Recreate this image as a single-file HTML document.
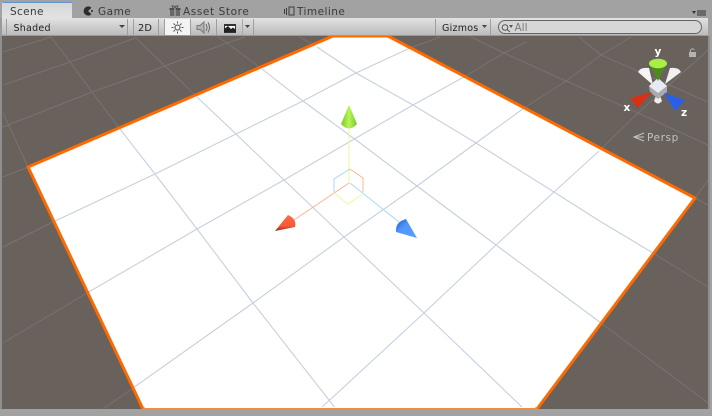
<!DOCTYPE html>
<html><head><meta charset="utf-8"><style>
html,body{margin:0;padding:0;width:712px;height:416px;overflow:hidden;background:#a2a2a2}
svg{display:block}
text{font-family:"DejaVu Sans","Liberation Sans",sans-serif}
</style></head><body>
<svg width="712" height="416" viewBox="0 0 712 416" xmlns="http://www.w3.org/2000/svg">
<defs>
<linearGradient id="tb" x1="0" y1="0" x2="0" y2="1"><stop offset="0" stop-color="#e2e2e2"/><stop offset="1" stop-color="#b9b9b9"/></linearGradient>
<linearGradient id="tab" x1="0" y1="0" x2="0" y2="1"><stop offset="0" stop-color="#d6d6d6"/><stop offset="1" stop-color="#e2e2e2"/></linearGradient>
<linearGradient id="gr" x1="0" y1="0" x2="1" y2="0"><stop offset="0" stop-color="#7ec62c"/><stop offset=".5" stop-color="#b6f556"/><stop offset="1" stop-color="#7cc82c"/></linearGradient>
<linearGradient id="rd" x1="0" y1="0" x2="0" y2="1"><stop offset="0" stop-color="#ff6a45"/><stop offset=".7" stop-color="#f55a35"/><stop offset="1" stop-color="#8a2a18"/></linearGradient>
<linearGradient id="bl" x1="0" y1="0" x2="1" y2="1"><stop offset="0" stop-color="#2a55c0"/><stop offset=".4" stop-color="#4f96ff"/><stop offset="1" stop-color="#58a0ff"/></linearGradient>
</defs>
<rect width="712" height="416" fill="#a2a2a2"/>
<!-- scene -->
<rect x="2" y="36" width="706" height="373" fill="#69615b"/>
<rect x="0" y="36" width="2" height="373" fill="#8f8f8f"/>
<rect x="708" y="36" width="2" height="373" fill="#8f8f8f"/>
<g stroke="#787372" stroke-width="1" fill="none">
<path d="M51 37L70 62L92 92L120 129"/>
<path d="M135 37L165 66L197 97"/>
<path d="M218 37L227 43L262 69"/>
<path d="M300 37L317 47"/>
<path d="M471 37L504 53L566 81L638 113L708 145"/>
<path d="M579 37L601 55L708 102"/>
<path d="M3 113L28 167"/>
<path d="M695 198L708 205"/>
<path d="M601 323L708 403"/>
<path d="M653 253L708 287"/>
<path d="M3 177L28 167"/>
<path d="M3 127L92 92L165 66L227 43L245 37"/>
<path d="M3 85L70 62L135 38"/>
<path d="M3 52L51 37"/>
<path d="M410 48L424 43L440 37"/>
<path d="M464 77L504 53L526 42"/>
<path d="M524 108L566 81L601 55L631 37"/>
<path d="M599 151L638 113L708 50"/>
<path d="M695 198L708 180"/>
<path d="M3 247L53 222"/>
<path d="M3 343L87 293"/>
<path d="M103 409L133 388"/>
</g>
<!-- plane -->
<path d="M333 36H388L695 198L537 409H143L28 167Z" fill="#fff"/>
<g stroke="#c6d0dd" stroke-width="1.100" fill="none">
<path d="M120 129L155 174L197 229L253 303L336 409"/>
<path d="M197 97L236 134L284 180L344 237L424 313L524 409"/>
<path d="M262 69L303 101L356 140L417 186L496 245L601 323"/>
<path d="M317 47L356 73L413 105L476 143L554 192L598 220L653 253"/>
<path d="M53 222L155 174L236 134L303 101L356 73L410 48"/>
<path d="M87 293L197 229L284 180L356 138L413 105L464 77"/>
<path d="M133 388L253 303L344 237L417 186L476 143L524 108"/>
<path d="M320 409L424 313L496 245L554 192L599 151"/>
</g>
<!-- plane outline -->
<path d="M333 36H388L695 198L537 409H143L28 167Z" fill="none" stroke="#ff6a00" stroke-width="3" stroke-linejoin="round"/>
<rect x="135" y="409" width="410" height="7" fill="#a2a2a2"/>
<rect x="143" y="408" width="394" height="1" fill="#f08a40"/>
<rect x="145" y="407" width="390" height="1" fill="#fff"/>
<!-- transform gizmo -->
<g fill="none" stroke-width="1">
<path d="M349 128V183" stroke="#eef79a"/>
<path d="M349 183L294 220" stroke="#ffb09a"/>
<path d="M350 183L404 226" stroke="#a9d8ff"/>
<path d="M350 169L363 178V192" stroke="#ffb39c"/>
<path d="M350 169L334 179V193" stroke="#a9d4fb"/>
<path d="M334 193L348 204L363 194" stroke="#f3f59b"/>
</g>
<path d="M349 105L357 124Q349 133 341 124Z" fill="url(#gr)"/>
<path d="M275 231L288 215Q297 219 295 227Z" fill="url(#rd)"/>
<path d="M417 238L406 219Q395 222 396 232Z" fill="url(#bl)"/>
<!-- view gizmo -->
<g>
<path d="M653 85L638 72Q640 67 649 68Z" fill="#f4f4f4"/>
<path d="M665 84L670 68Q679 67 681 72Z" fill="#f0f0f0"/>
<path d="M656 96H660L662 101Q658 106 654 101Z" fill="#efefef"/>
<path d="M649 86L658 78L667 86V92L658 99L650 92Z" fill="#a9a9b0"/>
<path d="M649 86L658 78L667 86L658 93Z" fill="#e8ebf2"/>
<path d="M658 81L649 63Q658 58 667 63Z" fill="#4f8a1c"/>
<ellipse cx="658" cy="63.500" rx="9" ry="4.800" fill="#a6f046"/>
<path d="M652 92L630 98L638 108Z" fill="#d93014"/>
<path d="M664 93L685 100L675 111Z" fill="#2a5fe8"/>
<text x="623.500" y="111" font-size="10.500" font-weight="bold" fill="#fff">x</text>
<text x="681" y="116" font-size="10.500" font-weight="bold" fill="#fff">z</text>
<text x="654.500" y="55" font-size="10.500" font-weight="bold" fill="#fff">y</text>
<rect x="689" y="52" width="7" height="5" fill="#b5b2b0"/>
<path d="M690.500 52V50Q692.500 47.500 694.500 50" stroke="#b5b2b0" fill="none"/>
<path d="M644 133L634 137L644 141M634 137H644" stroke="#c8c5c2" fill="none"/>
<text x="647" y="141" font-size="10.500" letter-spacing=".6" fill="#c4c1be">Persp</text>
</g>
<!-- tabs -->
<path d="M2 18V4Q2 2 4 2H70Q72 2 72 4V18Z" fill="url(#tab)"/>
<rect x="3" y="2" width="69" height="1" fill="#5f92d0"/>
<text x="10" y="15" font-size="10.500" letter-spacing=".35" fill="#3a3a3a">Scene</text>
<path d="M91.500 7.800A4.600 4.600 0 1 0 91.500 14.200L88 11Z" fill="#2c2c2c"/><circle cx="92" cy="11" r="1" fill="#2c2c2c"/>
<text x="98" y="15" font-size="10.500" letter-spacing=".5" fill="#3a3a3a">Game</text>
<path d="M170 9H180V16H170Z" fill="#6a6a6a"/><path d="M169.500 8H180.500V10H169.500Z" fill="#4f4f4f"/><path d="M173 8L172 6H174L175 8L176 6H178L177 8" stroke="#555" fill="none"/><path d="M175 8V16" stroke="#b8b8b8"/>
<text x="183" y="15" font-size="10.500" letter-spacing=".6" fill="#3a3a3a">Asset Store</text>
<path d="M284.500 9V14M286.500 8V15M289 7H294V15H289Z" stroke="#3c3c3c" fill="none"/>
<text x="297" y="15" font-size="10.500" letter-spacing=".45" fill="#3a3a3a">Timeline</text>
<path d="M692 11H696L694 14Z" fill="#333"/>
<path d="M697 11H706M697 13H706M697 15H706" stroke="#333"/>
<!-- toolbar -->
<rect x="0" y="18" width="712" height="18" fill="url(#tb)"/>
<rect x="0" y="35" width="712" height="1" fill="#9a9a9a"/>
<rect x="0" y="18" width="2" height="18" fill="#9a9a9a"/>
<rect x="708" y="18" width="4" height="18" fill="#a2a2a2"/>
<rect x="165" y="19" width="26" height="16" fill="#f3f3f3"/>
<g fill="#9e9e9e">
<rect x="6" y="19" width="1" height="16"/><rect x="127" y="19" width="1" height="16"/>
<rect x="133" y="19" width="1" height="16"/><rect x="158" y="19" width="1" height="16"/>
<rect x="164" y="19" width="1" height="16"/><rect x="190" y="19" width="1" height="16"/>
<rect x="216" y="19" width="1" height="16"/><rect x="253" y="19" width="1" height="16"/>
<rect x="435" y="19" width="1" height="16"/><rect x="490" y="19" width="1" height="16"/>
</g>
<text x="13.500" y="31" font-size="9.500" letter-spacing=".25" fill="#222">Shaded</text>
<path d="M119 25H125L122 28Z" fill="#444"/>
<text x="138" y="31" font-size="9.800" letter-spacing=".2" fill="#222">2D</text>
<circle cx="177.500" cy="27.500" r="2.500" fill="none" stroke="#444"/>
<path d="M177.500 21.500V23.500M177.500 31.500V33.500M171.500 27.500H173.500M181.500 27.500H183.500M173.500 23.500L175 25M180 30L181.500 31.500M181.500 23.500L180 25M175 30L173.500 31.500" stroke="#555"/>
<path d="M197 25.500H200L204 22V33L200 29.500H197Z" fill="#b2b2b2" stroke="#777"/>
<path d="M206 24Q208 27.500 206 31M208 22.500Q211 27.500 208 32.500" stroke="#666" fill="none"/>
<rect x="224.500" y="24.500" width="11" height="8" fill="#fff" stroke="#333"/>
<path d="M224 32V29L228 26L231 29L233 27.500L236 30V32Z" fill="#222"/><rect x="224" y="24" width="12" height="2" fill="#333"/>
<rect x="242" y="19" width="1" height="16" fill="#a8a8a8"/>
<path d="M245 25H250L247.500 28Z" fill="#444"/>
<text x="442" y="31" font-size="9.500" letter-spacing=".25" fill="#222">Gizmos</text>
<path d="M482 25H487L484.500 28Z" fill="#444"/>
<rect x="498.500" y="20.500" width="203" height="13" rx="6.500" fill="#d6d6d6" stroke="#666"/>
<circle cx="505" cy="27.500" r="2.800" fill="none" stroke="#555"/><path d="M507 29.500L510 32" stroke="#555"/>
<path d="M509 25H513L511 28Z" fill="#555"/>
<text x="514.500" y="31" font-size="10.500" fill="#7a7a7a">All</text>
</svg>
</body></html>
